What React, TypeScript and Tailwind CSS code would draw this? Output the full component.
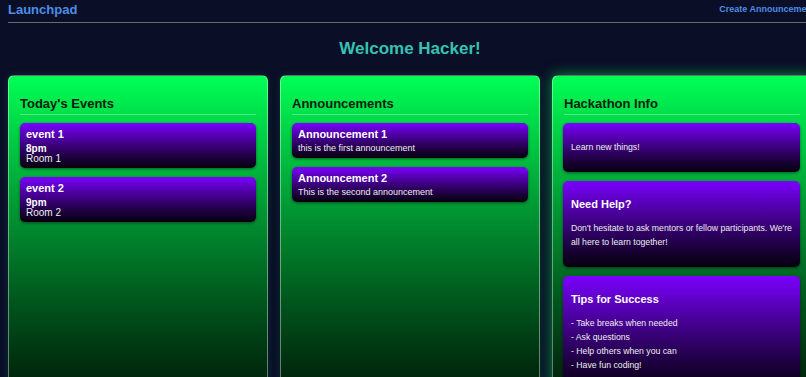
import React from 'react';

const events = [
  { name: 'event 1', time: '8pm', room: 'Room 1' },
  { name: 'event 2', time: '9pm', room: 'Room 2' },
];

const announcements = [
  { title: 'Announcement 1', body: 'this is the first announcement' },
  { title: 'Announcement 2', body: 'This is the second announcement' },
];

const tips = ['- Take breaks when needed', '- Ask questions', '- Help others when you can', '- Have fun coding!'];

function Card({ title, glow, children }: { title: string; glow?: boolean; children: React.ReactNode }) {
  return (
    <div
      className={
        'h-[340px] rounded-[6px] border border-white/40 bg-gradient-to-b from-[#00ff55] to-[#001205] pt-[20px] px-[11px] ' +
        (glow ? 'shadow-[0_0_14px_rgba(0,255,85,0.55)]' : 'shadow-[0_0_8px_rgba(0,255,120,0.12)]')
      }
    >
      <h2 className="text-[13px] leading-[15px] font-bold text-[#0b1f0e] pb-[3px] border-b border-white/30 mb-2">
        {title}
      </h2>
      {children}
    </div>
  );
}

const item = 'rounded-[5px] bg-gradient-to-b from-[#7a00ff] to-[#06000f] shadow-[0_1px_3px_rgba(0,0,0,0.5)] text-white';

export default function App() {
  return (
    <div className="w-full h-screen overflow-hidden bg-[#0a0e27]" style={{ fontFamily: '"Liberation Sans", Arial, sans-serif' }}>
      <div className="w-[820px]">
        <nav className="mx-2 h-[23px] flex items-start justify-between border-b border-[#6b6b6b] pt-[2px]">
          <span className="text-[13px] leading-[15px] font-bold text-[#4a8fe6]">Launchpad</span>
          <span className="text-[9px] leading-[15px] font-bold text-[#4a8fe6] -mr-[3px]">Create Announcement</span>
        </nav>

        <h1 className="text-center text-[17px] leading-[20px] font-bold text-[#36c3b3] mt-[16px] mb-[16px]">
          Welcome Hacker!
        </h1>

        <div className="grid grid-cols-3 gap-3 px-2">
          <Card title="Today's Events">
            <div className="flex flex-col gap-[9px]">
              {events.map((e) => (
                <div key={e.name} className={item + ' px-[6px] pt-[5px] pb-[4px]'}>
                  <div className="text-[11px] leading-[13px] font-bold">{e.name}</div>
                  <div className="text-[10px] leading-[10px] font-bold mt-[3px]">{e.time}</div>
                  <div className="text-[10px] leading-[10px] text-[#eeeeee]">{e.room}</div>
                </div>
              ))}
            </div>
          </Card>

          <Card title="Announcements">
            <div className="flex flex-col gap-[9px]">
              {announcements.map((a) => (
                <div key={a.title} className={item + ' px-[6px] py-[5px]'}>
                  <div className="text-[11px] leading-[13px] font-bold">{a.title}</div>
                  <div className="text-[9px] leading-[10px] mt-[2px] text-[#eeeeee]">{a.body}</div>
                </div>
              ))}
            </div>
          </Card>

          <Card title="Hackathon Info" glow>
            <div className="flex flex-col gap-[9px] -ml-[1px]">
              <div className={item + ' px-[8px] pt-[17px] pb-[18px]'}>
                <p className="text-[8.7px] leading-[14px] text-[#eeeeee]">Learn new things!</p>
              </div>
              <div className={item + ' px-[8px] pt-[17px] pb-[18px]'}>
                <h3 className="text-[11px] leading-[13px] font-bold mb-[10px]">Need Help?</h3>
                <p className="text-[8.7px] leading-[14px] text-[#eeeeee]">
                  Don't hesitate to ask mentors or fellow participants. We're all here to learn together!
                </p>
              </div>
              <div className={item + ' px-[8px] pt-[17px] pb-[18px]'}>
                <h3 className="text-[11px] leading-[13px] font-bold mb-[10px]">Tips for Success</h3>
                {tips.map((t) => (
                  <p key={t} className="text-[8.7px] leading-[14px] text-[#eeeeee]">{t}</p>
                ))}
              </div>
            </div>
          </Card>
        </div>
      </div>
    </div>
  );
}
